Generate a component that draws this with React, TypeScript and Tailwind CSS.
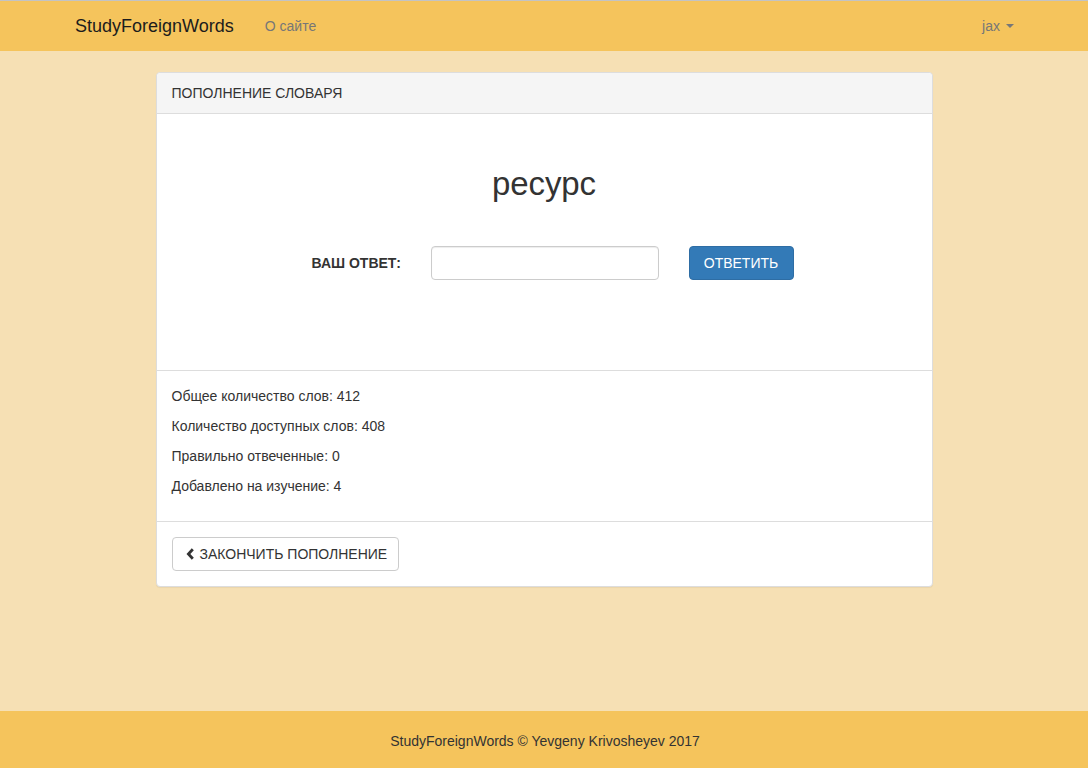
import { useState } from "react";

const ChevronLeft = () => (
  <svg width="9" height="12" viewBox="0 0 9 12" className="mr-[5px]">
    <path d="M6.8 1.2 L2.4 6 L6.8 10.8" fill="none" stroke="#333" strokeWidth="2.8" strokeLinejoin="miter" />
  </svg>
);

const Stat = ({ label, value }: { label: string; value: number }) => (
  <p className="mb-[10px] leading-5">
    {label}: {value}
  </p>
);

export default function App() {
  const [answer, setAnswer] = useState("");

  return (
    <div
      className="flex min-h-[768px] flex-col bg-[#f6e0b4] text-[14px] text-[#333]"
      style={{ fontFamily: '"Liberation Sans", Arial, sans-serif' }}
    >
      <nav className="h-[51px] border-t border-[#c3c3c3] bg-[#f5c45c]">
        <div className="mx-auto flex h-[50px] w-[970px] items-center pl-[16px] pr-[15px]">
          <a className="text-[18px] leading-5 text-[#1c1c1c]">StudyForeignWords</a>
          <a className="ml-[31px] leading-5 text-[#777]">О сайте</a>
          <a className="ml-auto flex items-center leading-5 text-[#777]">
            jax
            <span className="ml-[6px] h-0 w-0 border-x-[4px] border-t-[4px] border-x-transparent border-t-[#777]" />
          </a>
        </div>
      </nav>

      <main className="flex-1 pt-[21px]">
        <div className="mx-auto w-[777px] rounded-[4px] border border-[#ddd] bg-white shadow-[0_1px_1px_rgba(0,0,0,0.05)]">
          <div className="rounded-t-[4px] border-b border-[#ddd] bg-[#f5f5f5] px-[15px] py-[10px] leading-5">
            ПОПОЛНЕНИЕ СЛОВАРЯ
          </div>

          <div className="h-[256px] pt-[52px]">
            <h2 className="text-center text-[33px] leading-[36px] text-[#333]">ресурс</h2>
            <div className="mt-[44px] flex items-center pl-[155px]">
              <label className="w-[88px] shrink-0 whitespace-nowrap font-bold leading-5">ВАШ ОТВЕТ:</label>
              <input
                value={answer}
                onChange={(e) => setAnswer(e.target.value)}
                className="ml-[31px] h-[34px] w-[228px] rounded-[4px] border border-[#ccc] px-3 shadow-[inset_0_1px_1px_rgba(0,0,0,0.075)] outline-none"
              />
              <button
                type="button"
                className="ml-[30px] h-[34px] w-[105px] rounded-[4px] border border-[#2e6da4] bg-[#337ab7] text-white"
              >
                ОТВЕТИТЬ
              </button>
            </div>
          </div>

          <div className="border-t border-[#ddd] px-[15px] pt-[15px] pb-[15px]">
            <Stat label="Общее количество слов" value={412} />
            <Stat label="Количество доступных слов" value={408} />
            <Stat label="Правильно отвеченные" value={0} />
            <Stat label="Добавлено на изучение" value={4} />
          </div>

          <div className="border-t border-[#ddd] p-[15px]">
            <button
              type="button"
              className="flex h-[34px] w-[227px] items-center rounded-[4px] border border-[#ccc] bg-white pl-[13px] text-[#333]"
            >
              <ChevronLeft />
              ЗАКОНЧИТЬ ПОПОЛНЕНИЕ
            </button>
          </div>
        </div>
      </main>

      <footer className="flex h-[57px] items-center justify-center bg-[#f5c45c] pt-[3px] pl-[2px] leading-5">
        StudyForeignWords © Yevgeny Krivosheyev 2017
      </footer>
    </div>
  );
}
